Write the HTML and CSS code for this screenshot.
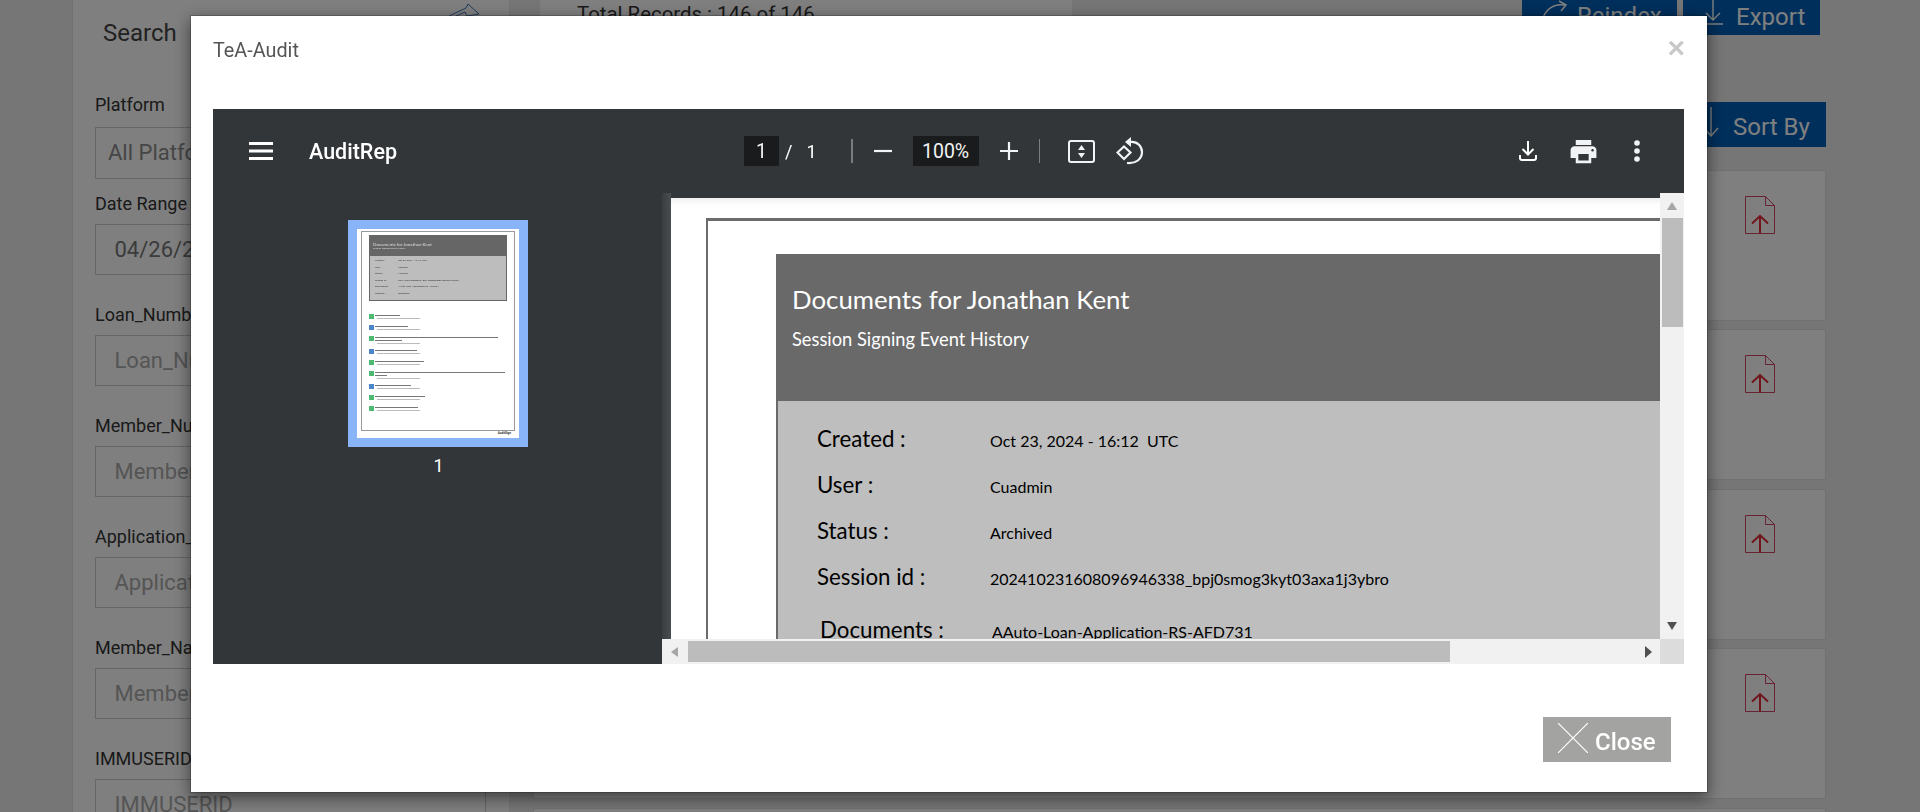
FILE: index.html
```html
<!DOCTYPE html>
<html lang="en">
<head>
<meta charset="utf-8">
<title>TeA-Audit</title>
<link rel="stylesheet" href="styles.css">
</head>
<body>
<div class="app">
  <aside class="search">
    <div class="search-head">
      <h2>Search</h2>
      <svg class="pin" width="32" height="14" viewBox="0 0 32 14"><path d="M1 13 L18 5 L20 1 L31 11 L19 13 L17 9 L8 13" fill="none" stroke="#3f75b8" stroke-width="1"/></svg>
    </div>
    <div class="field tight"><label>Platform</label><div class="box select">All Platforms</div></div>
    <div class="field"><label>Date Range</label><div class="box value">04/26/2024 - 10/23/2024</div></div>
    <div class="field"><label>Loan_Number</label><div class="box">Loan_Number</div></div>
    <div class="field"><label>Member_Number</label><div class="box">Member_Number</div></div>
    <div class="field"><label>Application_Number</label><div class="box">Application_Number</div></div>
    <div class="field"><label>Member_Name</label><div class="box">Member_Name</div></div>
    <div class="field"><label>IMMUSERID</label><div class="box">IMMUSERID</div></div>
  </aside>
  <main class="results">
    <div class="results-head">
      <div class="records">Total Records : 146 of 146</div>
      <div class="actions">
        <button class="btn reindex"><svg width="30" height="30" viewBox="0 0 30 30"><path d="M2 28 C3 12 12 3 26 5 M20 1 L27 5 L22 11" fill="none" stroke="#fff" stroke-width="1.6"/></svg>Reindex</button>
        <button class="btn export"><svg width="20" height="26" viewBox="0 0 20 26"><path d="M10 0 V21 M3 14 L10 21 L17 14 M0 25 H20" fill="none" stroke="#fff" stroke-width="1.4"/></svg>Export</button>
      </div>
    </div>
    <div class="sort-row">
      <button class="btn sort"><svg width="18" height="30" viewBox="0 0 18 30"><path d="M9 0 V29 M2 21 L9 29 L16 21" fill="none" stroke="#fff" stroke-width="1.4"/></svg>Sort By</button>
    </div>
    <div class="cards">
      <div class="card"><svg class="file" width="30" height="38" viewBox="0 0 30 38"><path d="M.5.5 H20.5 L29.5 9.500 V37.500 H.5 Z M20.500.5 V9.500 H29.500" fill="none" stroke="#d04464" stroke-width="1"/><path d="M15 37 V20 M7 27.500 L15 20 L23 27.500" fill="none" stroke="#e02a38" stroke-width="2"/></svg></div>
      <div class="card"><svg class="file" width="30" height="38" viewBox="0 0 30 38"><path d="M.5.5 H20.5 L29.5 9.500 V37.500 H.5 Z M20.500.5 V9.500 H29.500" fill="none" stroke="#d04464" stroke-width="1"/><path d="M15 37 V20 M7 27.500 L15 20 L23 27.500" fill="none" stroke="#e02a38" stroke-width="2"/></svg></div>
      <div class="card"><svg class="file" width="30" height="38" viewBox="0 0 30 38"><path d="M.5.5 H20.5 L29.5 9.500 V37.500 H.5 Z M20.500.5 V9.500 H29.500" fill="none" stroke="#d04464" stroke-width="1"/><path d="M15 37 V20 M7 27.500 L15 20 L23 27.500" fill="none" stroke="#e02a38" stroke-width="2"/></svg></div>
      <div class="card"><svg class="file" width="30" height="38" viewBox="0 0 30 38"><path d="M.5.5 H20.5 L29.5 9.500 V37.500 H.5 Z M20.500.5 V9.500 H29.500" fill="none" stroke="#d04464" stroke-width="1"/><path d="M15 37 V20 M7 27.500 L15 20 L23 27.500" fill="none" stroke="#e02a38" stroke-width="2"/></svg></div>
      <div class="card"></div>
    </div>
  </main>
</div>

<div class="backdrop"></div>

<section class="modal">
  <header class="modal-head">
    <h4>TeA-Audit</h4>
    <span class="x">×</span>
  </header>

  <div class="viewer">
    <div class="toolbar">
      <div class="tb-left">
        <svg class="menu" width="24" height="18" viewBox="0 0 24 18"><path d="M0 1.500 H24 M0 9 H24 M0 16.500 H24" stroke="#fff" stroke-width="3"/></svg>
        <span class="doc-name">AuditRep</span>
      </div>
      <div class="tb-center">
        <span class="num-box page-box">1</span>
        <span class="slash">/</span>
        <span class="total">1</span>
        <span class="sep first"></span>
        <svg class="minus" width="18" height="18" viewBox="0 0 18 18"><path d="M0 9 H18" stroke="#f1f3f4" stroke-width="2.2"/></svg>
        <span class="num-box zoom-box">100%</span>
        <svg class="plus" width="18" height="18" viewBox="0 0 18 18"><path d="M0 9 H18 M9 0 V18" stroke="#f1f3f4" stroke-width="2.2"/></svg>
        <span class="sep second"></span>
        <svg class="fit" width="27" height="23" viewBox="0 0 27 23"><rect x="1" y="1" width="25" height="21" rx="2" fill="none" stroke="#f1f3f4" stroke-width="2"/><path d="M13.500 5 L17 10 H10 Z M13.500 18 L10 13 H17 Z" fill="#f1f3f4"/></svg>
        <svg class="rotate" width="28" height="28" viewBox="0 0 28 28"><path d="M8 9.500 L14.500 15.500 L8 22 L1.500 15.500 Z" fill="none" stroke="#f1f3f4" stroke-width="2.200"/><path d="M14 5 C22 4 26 10 26 15 C26 22 20 27 11 26" fill="none" stroke="#f1f3f4" stroke-width="2.200"/><path d="M9 5 L15 0 V10 Z" fill="#f1f3f4"/></svg>
      </div>
      <div class="tb-right">
        <svg class="download" width="18" height="20" viewBox="0 0 18 20"><path d="M9 0 V13 M3.500 8 L9 13.500 L14.500 8" fill="none" stroke="#fff" stroke-width="2"/><path d="M1 14 V17 Q1 19 3 19 H15 Q17 19 17 17 V14" fill="none" stroke="#fff" stroke-width="2"/></svg>
        <svg class="print" width="31" height="31" viewBox="0 0 24 24"><path fill="#f1f3f4" d="M19 8H5c-1.660 0-3 1.340-3 3v6h4v4h12v-4h4v-6c0-1.660-1.340-3-3-3zm-3 11H8v-5h8v5zm3-7c-.55 0-1-.45-1-1s.45-1 1-1 1 .45 1 1-.45 1-1 1zm-1-9H6v4h12V3z"/></svg>
        <svg class="dots" width="8" height="22" viewBox="0 0 8 22"><circle cx="4" cy="3" r="2.800" fill="#f1f3f4"/><circle cx="4" cy="11" r="2.800" fill="#f1f3f4"/><circle cx="4" cy="19" r="2.800" fill="#f1f3f4"/></svg>
      </div>
    </div>

    <div class="viewer-body">
      <nav class="sidebar">
        <div class="thumb">
          <div class="mini-frame">
            <div class="mini-block">
              <div class="mini-head">
                <div class="mini-title">Documents for Jonathan Kent</div>
                <div class="mini-sub">Session Signing Event History</div>
              </div>
              <div class="mini-body">
                <div class="mini-row"><span>Created :</span><span>Oct 23, 2024 - 16:12 UTC</span></div>
                <div class="mini-row"><span>User :</span><span>Cuadmin</span></div>
                <div class="mini-row"><span>Status :</span><span>Archived</span></div>
                <div class="mini-row"><span>Session id :</span><span>20241023160809694633_bpj0smog3kyt03axa1j3ybro</span></div>
                <div class="mini-row"><span>Documents :</span><span>AAuto-Loan-Application-RS-AFD731</span></div>
                <div class="mini-row"><span>Platform :</span><span>Immutable</span></div>
              </div>
            </div>
            <div class="mini-list">
              <div class="mi"><i class="g"></i><div><b style="width:25px"></b><u></u></div></div>
              <div class="mi"><i class="bl"></i><div><b style="width:33px"></b><u></u></div></div>
              <div class="mi two"><i class="g"></i><div><b style="width:123px"></b><b style="width:27px"></b><u></u></div></div>
              <div class="mi"><i class="bl"></i><div><b style="width:42px"></b><u></u></div></div>
              <div class="mi"><i class="g"></i><div><b style="width:49px"></b><u></u></div></div>
              <div class="mi two"><i class="g"></i><div><b style="width:130px"></b><b style="width:12px"></b><u></u></div></div>
              <div class="mi"><i class="bl"></i><div><b style="width:36px"></b><u></u></div></div>
              <div class="mi"><i class="g"></i><div><b style="width:50px"></b><u></u></div></div>
              <div class="mi"><i class="g"></i><div><b style="width:43px"></b><u></u></div></div>
            </div>
          </div>
          <div class="mini-brand">AuditSign</div>
        </div>
        <div class="thumb-num">1</div>
      </nav>

      <div class="doc-area">
        <div class="doc-pane">
          <div class="sheet">
            <div class="frame">
              <div class="block">
                <div class="block-head">
                  <div class="block-title">Documents for Jonathan Kent</div>
                  <div class="block-sub">Session Signing Event History</div>
                </div>
                <div class="block-body">
                  <div class="row"><span class="k">Created :</span><span class="v">Oct 23, 2024 - 16:12&nbsp; UTC</span></div>
                  <div class="row"><span class="k">User :</span><span class="v">Cuadmin</span></div>
                  <div class="row"><span class="k">Status :</span><span class="v">Archived</span></div>
                  <div class="row"><span class="k">Session id :</span><span class="v">202410231608096946338_bpj0smog3kyt03axa1j3ybro</span></div>
                  <div class="row docs"><span class="k">Documents :</span><span class="v">AAuto-Loan-Application-RS-AFD731</span></div>
                </div>
              </div>
            </div>
          </div>
        </div>
        <div class="vbar">
          <span class="arrow up"></span>
          <span class="vthumb"></span>
          <span class="arrow down"></span>
        </div>
        <div class="hbar">
          <span class="arrow left"></span>
          <span class="hthumb"></span>
          <span class="arrow right"></span>
        </div>
        <div class="corner"></div>
      </div>
    </div>
  </div>

  <footer class="modal-foot">
    <button class="close-btn"><svg width="30" height="30" viewBox="0 0 30 30"><path d="M0 0 L30 30 M30 0 L0 30" stroke="#fff" stroke-width="1.200"/></svg><span>Close</span></button>
  </footer>
</section>
</body>
</html>
```
FILE: styles.css
```css
* { box-sizing: border-box; }
html, body { margin: 0; height: 100%; overflow: hidden; }
body { background: #ececec; font-family: Roboto, "Liberation Sans", sans-serif; color: #444; }
button { border: 0; font-family: inherit; padding: 0; }

/* page behind the dialog */
.app { display: grid; grid-template-columns: 72px 437px 24px 1293px; height: 812px; overflow: hidden; }
.search { grid-column: 2; background: #fff; border-left: 1px solid #e2e2e2; padding: 16px 23px 0 22px; }
.search-head { display: flex; justify-content: space-between; height: 30px; margin-bottom: 47px; padding-left: 8px; }
.search-head h2 { margin: 2px 0 0; font-size: 24px; font-weight: 400; line-height: 30px; color: #444; }
.pin { margin: -13px 6px 0 0; }
.field { margin-bottom: 28px; }
.field.tight { margin-bottom: 13px; }
.field label { display: block; font-size: 18px; line-height: 24px; height: 24px; margin-bottom: 8px; color: #333; }
.field.tight label { margin-bottom: 10px; }
.box { height: 51px; border: 1px solid #ccc; padding-left: 18.500px; font-size: 22px; line-height: 50px; color: #aaa; white-space: nowrap; overflow: hidden; }
.box.select { padding-left: 12px; color: #8c8c8c; height: 52px; }
.box.value { color: #777; }

.results { grid-column: 4; }
.results-head { display: flex; height: 35px; }
.records { margin-left: 7px; width: 532px; height: 35px; padding: 0 0 0 37px; background: #fff; font-size: 20.400px; line-height: 28px; color: #333; }
.actions { margin-left: auto; margin-right: 6px; display: flex; gap: 6px; }
.btn { display: flex; align-items: center; background: #005fb8; color: #fff; font-size: 24px; height: 35px; }
.reindex { width: 155px; padding-left: 17px; gap: 8px; align-items: flex-start; line-height: 32px; }
.export { width: 137px; padding: 0 0 2px 20px; gap: 13px; }
.export svg { margin-top: -9px; }
.sort-row { display: flex; justify-content: flex-end; margin-top: 67px; height: 45px; }
.sort { height: 45px; width: 136px; padding: 5px 0 0 12px; gap: 13px; }
.sort svg { margin-top: -10px; }
.cards { margin-top: 23px; display: flex; flex-direction: column; gap: 8.400px; }
.card { height: 151px; flex: none; background: #fff; border: 1px solid #e2e2e2; display: flex; justify-content: flex-end; align-items: flex-start; padding: 25px 50px 0 0; }

.backdrop { position: fixed; inset: 0; background: rgba(0, 0, 0, .5); }

/* dialog */
.modal { position: fixed; left: 190px; top: 15px; width: 1518px; height: 778px; background: #fff; background-clip: padding-box; border: 1px solid rgba(0, 0, 0, .2); box-shadow: 0 5px 15px rgba(0, 0, 0, .5); display: flex; flex-direction: column; padding: 0 23px 0 22px; }
.modal-head { height: 93px; flex: none; display: flex; justify-content: space-between; align-items: flex-start; }
.modal-head h4 { margin: 0; padding-top: 23px; font-size: 19.800px; font-weight: 400; line-height: 24px; color: #555; }
.x { font-family: "Liberation Sans", sans-serif; font-weight: 700; font-size: 30px; line-height: 30px; color: #c8c8c8; padding-top: 17px; margin-right: -1px; }

.viewer { height: 555px; flex: none; display: flex; flex-direction: column; background: #323639; }
.toolbar { height: 84px; flex: none; display: flex; align-items: center; background: #323639; color: #fff; }
.tb-left { width: 531px; display: flex; align-items: center; padding-left: 36px; }
.doc-name { margin: 2px 0 0 36px; font-size: 21.500px; font-weight: 500; line-height: 28px; }
.tb-center { display: flex; align-items: center; }
.num-box { background: #191b1c; height: 30px; line-height: 32px; text-align: center; font-size: 19.500px; color: #f1f3f4; }
.page-box { width: 35px; }
.slash { margin-left: 6px; font-size: 18px; }
.total { margin-left: 14px; font-size: 18px; }
.sep { width: 1px; height: 24px; background: #7a7d80; }
.sep.first { margin-left: 34px; width: 2px; }
.minus { margin-left: 21px; }
.zoom-box { width: 66px; margin-left: 21px; }
.plus { margin-left: 21px; }
.sep.second { margin-left: 21px; }
.fit { margin-left: 28px; }
.rotate { margin-left: 21px; }
.tb-right { margin-left: auto; display: flex; align-items: center; padding-right: 43px; }
.print { margin-left: 31px; }
.dots { margin-left: 34px; }

.viewer-body { flex: 1; display: flex; min-height: 0; }
.sidebar { width: 449px; flex: none; display: flex; flex-direction: column; align-items: center; padding: 27px 0 0 1px; background: #323639; }
.thumb { width: 180px; height: 227px; border: 9px solid #8ab4f8; background: #fff; padding: 2px 4px 0; }
.thumb-num { margin: 8px 0 0 1px; font-size: 18px; line-height: 22px; color: #fff; }
.mini-frame { height: 200px; border: 1.500px solid #999; padding: 3px 7px 0; filter: blur(.35px); }
.mini-block { height: 66px; border: 1px solid #666; }
.mini-head { height: 20px; background: #666; color: #ddd; padding: 6px 0 0 3px; font-family: Lato, sans-serif; }
.mini-title { font-size: 4.500px; line-height: 5px; }
.mini-sub { font-size: 2.500px; line-height: 4px; }
.mini-body { height: 44px; background: #bdbdbd; padding: 2px 0 0 5px; font-family: Lato, sans-serif; font-size: 2.500px; color: #333; }
.mini-row { display: flex; height: 6.500px; line-height: 6px; white-space: nowrap; }
.mini-row span:first-child { width: 23px; }
.mini-list { margin: 13px 0 0 0; }
.mi { display: flex; gap: 1px; height: 11px; }
.mi.two { height: 13px; }
.mi i { width: 5px; height: 5px; flex: none; }
.mi .g { background: #4cba72; }
.mi .bl { background: #4b86c8; }
.mi b { display: block; height: 1px; margin: 1px 0 2px; background: #777; }
.mi u { display: block; height: 1px; width: 43px; margin-left: 2px; background: #bbb; }
.mini-brand { text-align: right; padding-right: 4px; font-size: 3px; line-height: 4px; font-weight: 700; color: #333; }

.doc-area { flex: 1; min-width: 0; display: grid; grid-template-columns: 1fr 24px; grid-template-rows: 446px 25px; }
.doc-pane { background: linear-gradient(90deg, #3a3e41 0, #4a4d50 100%) left / 9px 100% no-repeat, #323639; padding: 5px 0 0 9px; overflow: hidden; min-width: 0; }
.sheet { height: 441px; background: #fff; box-shadow: inset 0 8px 8px -8px rgba(0, 0, 0, .15); padding: 20px 0 0 35px; overflow: hidden; }
.frame { width: 1200px; height: 500px; border-top: 3px solid #6b6b6b; border-left: 2px solid #6b6b6b; padding: 33px 0 0 68px; }
.block { width: 1000px; }
.block-head { height: 147px; background: #696969; color: #fff; padding: 29px 0 0 16px; font-family: Lato, sans-serif; }
.block-title { font-size: 25.800px; line-height: 32px; }
.block-sub { margin-top: 12px; font-size: 18.300px; line-height: 24px; }
.block-body { height: 300px; background: #bebebe; border-left: 2px solid #696969; padding: 15px 0 0 39px; font-family: Lato, sans-serif; color: #000; }
.row { display: flex; align-items: baseline; height: 46px; line-height: 46px; white-space: nowrap; }
.row.docs { margin: 7px 0 0 3px; }
.row.docs .k { width: 172px; }
.k { width: 173px; font-size: 22.300px; }
.v { font-size: 16px; }

.vbar { grid-column: 2; grid-row: 1; background: #f1f1f1; display: flex; flex-direction: column; align-items: center; }
.vthumb { width: 21px; height: 109px; background: #bcbcbc; }
.arrow { flex: none; width: 0; height: 0; border-style: solid; }
.arrow.up { margin: 9px 0 8px; border-width: 0 5.500px 8px; border-color: transparent transparent #a6a6a6; }
.arrow.down { margin: auto 0 9px; border-width: 8px 5.500px 0; border-color: #505050 transparent transparent; }
.hbar { grid-column: 1; grid-row: 2; background: #f1f1f1; display: flex; align-items: center; }
.arrow.left { margin: 0 10px 0 9px; border-width: 5.500px 7px 5.500px 0; border-color: transparent #a6a6a6 transparent transparent; }
.hthumb { width: 762px; height: 21px; background: #bcbcbc; }
.arrow.right { margin: 0 8px 0 auto; border-width: 6px 0 6px 7px; border-color: transparent transparent transparent #505050; }
.corner { grid-column: 2; grid-row: 2; background: #dcdcdc; }

.modal-foot { flex: 1; display: flex; justify-content: flex-end; align-items: flex-start; padding: 53px 13px 0 0; }
.close-btn { width: 128px; height: 45px; display: flex; align-items: flex-start; background: #a3a3a1; color: #fff; padding: 6px 0 0 15px; }
.close-btn span { margin-left: 7px; font-size: 24px; font-weight: 500; line-height: 38px; }
```
